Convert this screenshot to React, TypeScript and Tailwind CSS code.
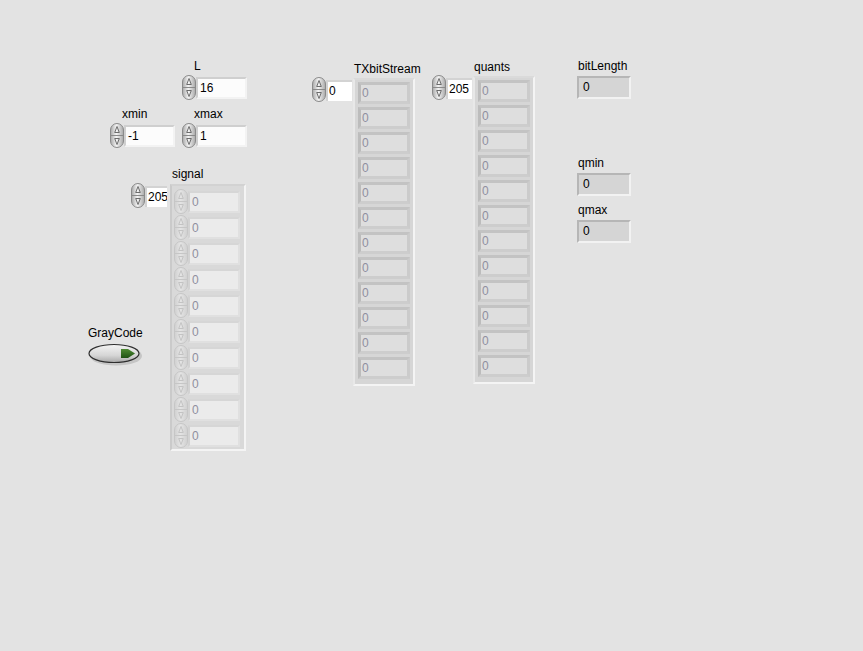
import { useId } from "react";

const Spinner = ({ faded = false }: { faded?: boolean }) => {
  const id = "g" + useId().replace(/[^a-zA-Z0-9]/g, "");
  const stroke = faded ? "#c6c6c6" : "#8a8a8a";
  const tri = faded ? "#c0c0c0" : "#5e5e5e";
  const light = faded ? "#e4e4e4" : "#f4f4f4";
  const dark = faded ? "#d0d0d0" : "#a8a8a8";
  return (
    <svg width="14" height="25" viewBox="0 0 14 25" className="shrink-0">
      <defs>
        <linearGradient id={id} x1="0" x2="1" y1="0" y2="0">
          <stop offset="0" stopColor={dark} />
          <stop offset="0.45" stopColor={light} />
          <stop offset="1" stopColor={dark} />
        </linearGradient>
      </defs>
      <rect x="0.5" y="0.5" width="13" height="24" rx="6.5" fill={`url(#${id})`} stroke={stroke} />
      <line x1="1" y1="12.5" x2="13" y2="12.5" stroke={stroke} />
      <path d="M7 3.5 L9.3 9.5 H4.7 Z" fill="none" stroke={tri} strokeWidth="0.9" />
      <path d="M7 21.5 L9.3 15.5 H4.7 Z" fill="none" stroke={tri} strokeWidth="0.9" />
    </svg>
  );
};

const Label = ({ text, className = "" }: { text: string; className?: string }) => (
  <div className={`h-[16px] leading-[14px] text-black whitespace-nowrap ${className}`}>{text}</div>
);

const ValueBox = ({ value, w = "w-[51px]" }: { value: string; w?: string }) => (
  <div
    className={`${w} h-[22px] bg-[#fcfcfc] border-2 border-t-[#cfcfcf] border-l-[#cfcfcf] border-r-[#f3f3f3] border-b-[#f3f3f3] pl-[2px] leading-[18px] text-black overflow-hidden whitespace-nowrap`}
  >
    {value}
  </div>
);

// numeric control: x/y = top-left of the spinner
const NumCtrl = ({ x, y, label, value }: { x: number; y: number; label: string; value: string }) => (
  <div className="absolute flex flex-col" style={{ left: x, top: y - 16 }}>
    <Label text={label} className="pl-[12px]" />
    <div className="flex items-center">
      <Spinner />
      <ValueBox value={value} />
    </div>
  </div>
);

const Indicator = ({ x, y, label }: { x: number; y: number; label: string }) => (
  <div className="absolute flex flex-col" style={{ left: x, top: y - 17 }}>
    <Label text={label} className="pl-[1px] h-[17px]" />
    <div className="w-[54px] h-[23px] bg-[#d5d5d5] border-2 border-t-[#b6b6b6] border-l-[#b6b6b6] border-r-[#f2f2f2] border-b-[#f2f2f2] pl-[4px] leading-[19px] text-black">
      0
    </div>
  </div>
);

const ElemBox = () => (
  <div className="w-[52px] h-[22px] bg-[#dedede] border-[3px] border-t-[#c3c3c3] border-l-[#bcbcbc] border-r-[#cbcbcb] border-b-[#cdcdcd] pl-[1px] leading-[16px] text-[#8f8f9e]">
    0
  </div>
);

const SignalElem = () => (
  <div className="w-[52px] h-[22px] bg-[#ebebeb] border-2 border-t-[#d6d6d6] border-l-[#d2d2d2] border-r-[#e0e0e0] border-b-[#e0e0e0] pl-[2px] leading-[18px] text-[#8f8f9e]">
    0
  </div>
);

const SignalArray = () => (
  <div className="absolute flex" style={{ left: 131, top: 167 }}>
    <div className="flex items-start pt-[16px]">
      <Spinner />
      <div className="mt-[3px] w-[22px] h-[21px] bg-white border-t-2 border-l-2 border-[#d3d3d3] leading-[18px] pl-[1px] overflow-hidden whitespace-nowrap text-black">
        205
      </div>
    </div>
    <div className="flex flex-col ml-[3px]">
      <Label text="signal" className="pl-[2px] h-[17px]" />
      <div className="w-[76px] h-[267px] bg-[#d9d9d9] border-2 border-t-[#d2d2d2] border-l-[#cacaca] border-r-[#f4f4f4] border-b-[#f4f4f4] pl-[2px] pt-[3px] flex flex-col gap-[1px]">
        {Array.from({ length: 10 }).map((_, i) => (
          <div key={i} className="flex items-center">
            <Spinner faded />
            <SignalElem />
          </div>
        ))}
      </div>
    </div>
  </div>
);

const BigArray = ({ x, y, label, index }: { x: number; y: number; label: string; index: string }) => (
  <div className="absolute flex" style={{ left: x, top: y }}>
    <div className="flex items-start pt-[15px]">
      <Spinner />
      <div className="mt-[3px] w-[26px] h-[21px] bg-white border-t-2 border-l-2 border-[#d3d3d3] leading-[18px] pl-[1px] overflow-hidden whitespace-nowrap text-black">
        {index}
      </div>
    </div>
    <div className="flex flex-col ml-[1px]">
      <Label text={label} className="pl-[1px] h-[15px]" />
      <div className="w-[62px] h-[308px] bg-[#d6d6d6] border-2 border-t-[#dadada] border-l-[#e8e8e8] border-r-[#f4f4f4] border-b-[#f4f4f4] pl-[3px] pt-[2px] flex flex-col gap-[3px]">
        {Array.from({ length: 12 }).map((_, i) => (
          <ElemBox key={i} />
        ))}
      </div>
    </div>
  </div>
);

const GrayCode = () => (
  <div className="absolute flex flex-col" style={{ left: 88, top: 326 }}>
    <Label text="GrayCode" className="h-[17px]" />
    <svg width="56" height="24" viewBox="0 0 56 24">
      <defs>
        <linearGradient id="btnFill" x1="0" x2="0" y1="0" y2="1">
          <stop offset="0" stopColor="#f4f4f4" />
          <stop offset="0.6" stopColor="#d6d6d6" />
          <stop offset="1" stopColor="#a8a8a8" />
        </linearGradient>
        <linearGradient id="btnGreen" x1="0" x2="0" y1="0" y2="1">
          <stop offset="0" stopColor="#4e8a33" />
          <stop offset="1" stopColor="#1f5213" />
        </linearGradient>
      </defs>
      <ellipse cx="28" cy="13" rx="26" ry="9.5" fill="#b8b8b8" opacity="0.7" />
      <ellipse cx="26" cy="10.5" rx="25" ry="9" fill="url(#btnFill)" stroke="#2e2e2e" strokeWidth="1.2" />
      <path d="M33 6 H40 L47 10.5 L40 15 H33 Z" fill="url(#btnGreen)" />
    </svg>
  </div>
);

export default function App() {
  return (
    <div className="relative w-[863px] h-[651px] overflow-hidden bg-[#e3e3e3] font-['Liberation_Sans',Arial,sans-serif] text-[12px]">
      <NumCtrl x={182} y={75} label="L" value="16" />
      <NumCtrl x={110} y={123} label="xmin" value="-1" />
      <NumCtrl x={182} y={123} label="xmax" value="1" />
      <SignalArray />
      <GrayCode />
      <BigArray x={312} y={62} label="TXbitStream" index="0" />
      <BigArray x={432} y={60} label="quants" index="205" />
      <Indicator x={577} y={76} label="bitLength" />
      <Indicator x={577} y={173} label="qmin" />
      <Indicator x={577} y={220} label="qmax" />
    </div>
  );
}
